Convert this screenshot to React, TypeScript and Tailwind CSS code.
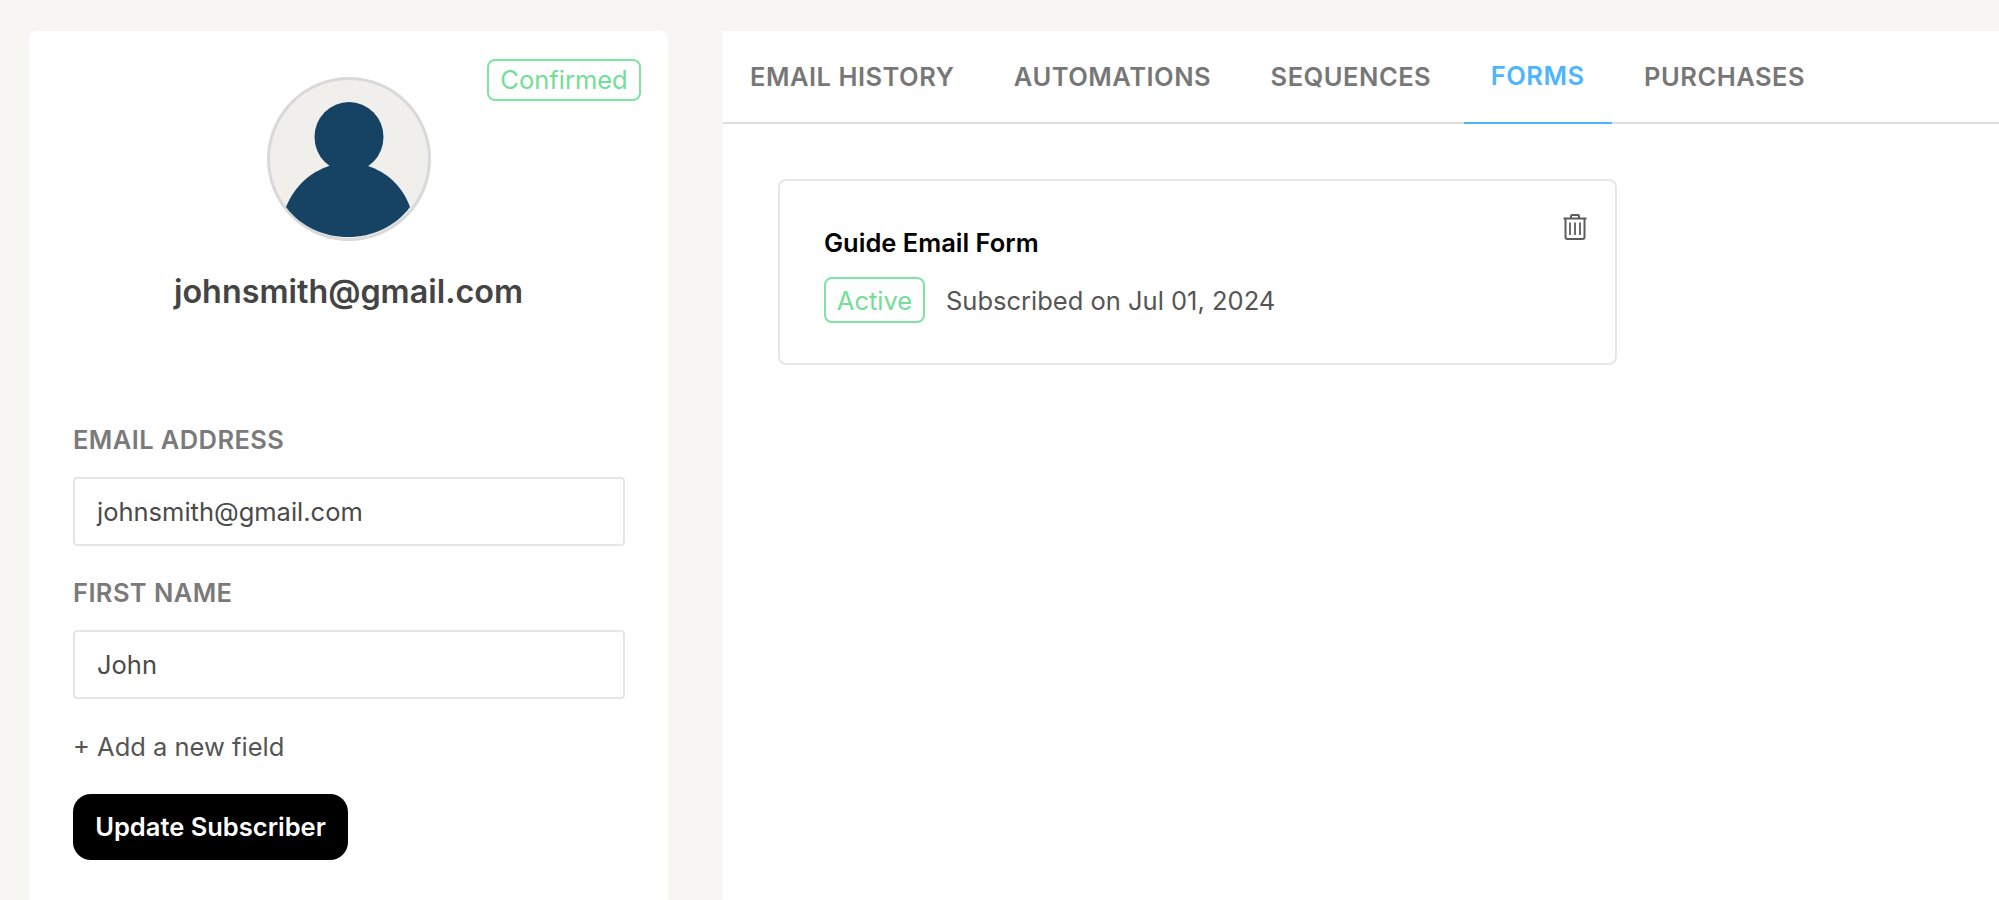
import React from "react";

const tabs = ["EMAIL HISTORY", "AUTOMATIONS", "SEQUENCES", "FORMS", "PURCHASES"];

function TrashIcon() {
  return (
    <svg width="24" height="26" viewBox="0 0 24 26" fill="none" stroke="#5c5c5c" strokeWidth="2" className="block">
      <path d="M0.5 4.5h23" />
      <path d="M8 4.5V2a1 1 0 0 1 1-1h6a1 1 0 0 1 1 1v2.5" />
      <path d="M2.5 4.5V23a2 2 0 0 0 2 2h15a2 2 0 0 0 2-2V4.5" />
      <path d="M7 8.5v12.5M12 8.5v12.5M17 8.5v12.5" strokeWidth="1.8" />
    </svg>
  );
}

function AvatarImage() {
  return (
    <svg width="164" height="164" viewBox="0 0 164 164" className="block">
      <circle cx="82" cy="82" r="80.5" fill="#f0efeb" stroke="#d9d9d9" strokeWidth="3" />
      <ellipse cx="82" cy="60" rx="34.5" ry="35" fill="#164264" />
      <path
        d="M19 130C28 108 44 95 62 89L101 89C119 95 135 108 143 130C128 150 105 160 81 160C57 160 34 150 19 130Z"
        fill="#164264"
      />
    </svg>
  );
}

function Field(props: { label: string; value: string }) {
  return (
    <div>
      <p className="text-[25.5px] leading-[30px] font-semibold tracking-[0.4px] text-[#7a7a7a]">{props.label}</p>
      <div className="mt-[22px] h-[69px] flex items-center border-2 border-[#e6e6e6] rounded-[4px] pl-[22px] pt-[1px] text-[25.5px] text-[#4a4a4a]">
        {props.value}
      </div>
    </div>
  );
}

export default function App() {
  return (
    <div className="h-[900px] overflow-hidden bg-[#f7f6f2] flex gap-[55px] pl-[29px] pt-[31px] font-['Inter',sans-serif]">
      <div className="relative w-[639px] shrink-0 bg-white rounded-t-[8px] pl-[44px] pr-[43px] pt-[46px]">
        <span className="absolute left-[458px] top-[28px] h-[42px] w-[154px] flex items-center justify-center border-2 border-[#7fe3a2] rounded-[8px] text-[25.5px] text-[#74dd97]">
          Confirmed
        </span>
        <div className="flex flex-col items-center pr-[1px]">
          <AvatarImage />
          <h1 className="mt-[31px] text-[32.3px] leading-[40px] font-semibold text-[#444444]">johnsmith@gmail.com</h1>
        </div>
        <div className="mt-[113px] flex flex-col gap-[32px]">
          <Field label="EMAIL ADDRESS" value="johnsmith@gmail.com" />
          <Field label="FIRST NAME" value="John" />
        </div>
        <p className="mt-[33px] text-[25.5px] leading-[30px] text-[#555555]">+ Add a new field</p>
        <button className="mt-[32px] block h-[66px] w-[275px] bg-black text-white text-[25.5px] font-semibold rounded-[18px]">
          Update Subscriber
        </button>
      </div>
      <div className="flex-1 bg-white">
        <div className="flex gap-[5.5px] border-b-2 border-[#dedede] h-[93px]">
          {tabs.map((tab) => (
            <div
              key={tab}
              className={
                tab === "FORMS"
                  ? "px-[27px] h-[93px] flex items-center border-b-2 border-[#4db5ff] text-[25.5px] font-semibold tracking-[0.5px] text-[#4db5ff]"
                  : "px-[27px] h-[93px] flex items-center text-[25.5px] font-semibold tracking-[0.5px] text-[#777777]"
              }
            >
              {tab}
            </div>
          ))}
        </div>
        <div className="pl-[55px] pt-[55px]">
          <div className="relative w-[839px] h-[186px] border-2 border-[#e6e6e6] rounded-[8px] pl-[44px] pt-[47px]">
            <button className="absolute right-[28px] top-[33px]">
              <TrashIcon />
            </button>
            <p className="text-[25.5px] leading-[30px] font-semibold text-black">Guide Email Form</p>
            <div className="mt-[19px] flex items-center gap-[21px]">
              <span className="h-[46px] w-[101px] flex items-center justify-center border-2 border-[#7fe3a2] rounded-[8px] pt-[3px] text-[25.5px] text-[#74dd97]">
                Active
              </span>
              <span className="pt-[3px] text-[25.5px] text-[#555555]">Subscribed on Jul 01, 2024</span>
            </div>
          </div>
        </div>
      </div>
    </div>
  );
}
